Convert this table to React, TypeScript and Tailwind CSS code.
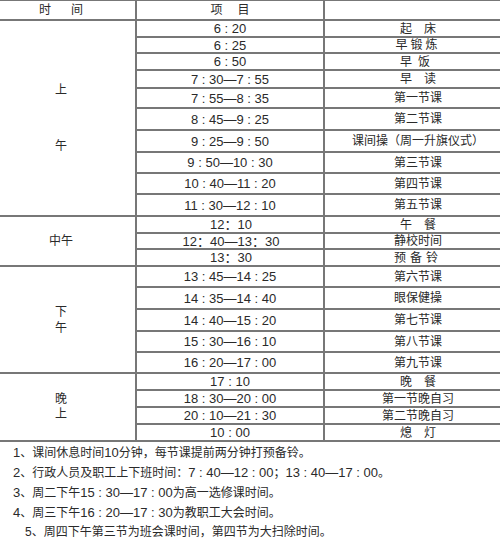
import { Fragment } from "react";

const rows: { time: string; item: string; sc?: boolean; track?: string }[] = [
  { time: "6 : 20", item: "起　床" },
  { time: "6 : 25", item: "早锻炼", track: "tracking-[3px]" },
  { time: "6 : 50", item: "早饭", track: "tracking-[6px]" },
  { time: "7 : 30—7 : 55", item: "早　读" },
  { time: "7 : 55—8 : 35", item: "第一节课" },
  { time: "8 : 45—9 : 25", item: "第二节课" },
  { time: "9 : 25—9 : 50", item: "课间操（周一升旗仪式）" },
  { time: "9 : 50—10 : 30", item: "第三节课" },
  { time: "10 : 40—11 : 20", item: "第四节课" },
  { time: "11 : 30—12 : 10", item: "第五节课" },
  { time: "12：10", item: "午　餐", sc: true },
  { time: "12：40—13：30", item: "静校时间", sc: true },
  { time: "13：30", item: "预备铃", sc: true, track: "tracking-[4px]" },
  { time: "13 : 45—14 : 25", item: "第六节课" },
  { time: "14 : 35—14 : 40", item: "眼保健操" },
  { time: "14 : 40—15 : 20", item: "第七节课" },
  { time: "15 : 30—16 : 10", item: "第八节课" },
  { time: "16 : 20—17 : 00", item: "第九节课" },
  { time: "17 : 10", item: "晚　餐" },
  { time: "18 : 30—20 : 00", item: "第一节晚自习" },
  { time: "20 : 10—21 : 30", item: "第二节晚自习" },
  { time: "10 : 00", item: "熄　灯" },
];

const notes = [
  "1、课间休息时间10分钟，每节课提前两分钟打预备铃。",
  "2、行政人员及职工上下班时间：7 : 40—12 : 00；13 : 40—17 : 00。",
  "3、周二下午15 : 30—17 : 00为高一选修课时间。",
  "4、周三下午16 : 20—17 : 30为教职工大会时间。",
];

const line = "border-[#777]";

// digits in the notes run a little larger than the Chinese text
function Note({ text }: { text: string }) {
  return (
    <>
      {text.split(/([\d :—]+)/).map((part, i) =>
        /\d/.test(part) ? (
          <span key={i} className="text-[13px]">
            {part}
          </span>
        ) : (
          <span key={i}>{part}</span>
        )
      )}
    </>
  );
}

function Group({ index }: { index: number }) {
  if (index === 0)
    return (
      <div className={`row-span-10 flex flex-col items-center justify-center gap-[38px] border-b-2 border-r-2 pr-[13px] ${line}`}>
        <span>上</span>
        <span>午</span>
      </div>
    );
  if (index === 10)
    return (
      <div className={`row-span-3 flex items-center justify-center border-b-2 border-r-2 pr-[13px] ${line}`}>
        中午
      </div>
    );
  if (index === 13)
    return (
      <div className={`row-span-5 flex flex-col items-center justify-center leading-[16px] border-b-2 border-r-2 pr-[13px] ${line}`}>
        <span>下</span>
        <span>午</span>
      </div>
    );
  if (index === 18)
    return (
      <div className={`row-span-4 flex flex-col items-center justify-center leading-[15px] border-b-2 border-r-2 pr-[13px] ${line}`}>
        <span>晚</span>
        <span>上</span>
      </div>
    );
  return null;
}

export default function App() {
  return (
    <div className="h-[550px] w-[500px] overflow-hidden bg-white font-['Liberation_Sans','Noto_Sans_CJK_SC',sans-serif] text-[12px] text-[#2a2a2a]">
      <div className={`grid grid-cols-[137px_188px_1fr] grid-rows-[20px_17px_16px_17px_18px_20px_22px_22px_21px_21px_22px_17px_16px_17px_21px_22px_22px_21px_21px_17px_17px_17px_17px] border-t ${line}`}>
        <div className={`flex items-center justify-center gap-[20px] border-b-2 border-r-2 pr-[13px] ${line}`}>
          <span>时</span>
          <span>间</span>
        </div>
        <div className={`flex items-center justify-center gap-[15px] border-b-2 border-r-2 ${line}`}>
          <span>项</span>
          <span>目</span>
        </div>
        <div className={`border-b-2 ${line}`} />

        {rows.map((r, i) => (
          <Fragment key={i}>
            <Group index={i} />
            <div
              className={`flex items-center justify-center whitespace-pre border-b-2 border-r-2 text-[13px] leading-none ${line} ${
                r.sc ? "pl-[2px]" : ""
              }`}
            >
              {r.time}
            </div>
            <div className={`flex items-center justify-center border-b-2 pl-[11px] leading-none ${line}`}>
              <span className={r.track ?? ""}>{r.item}</span>
            </div>
          </Fragment>
        ))}
      </div>

      <div className="pt-[1px] leading-[19px]">
        {notes.map((n) => (
          <div key={n} className="whitespace-pre pl-[13px]">
            <Note text={n} />
          </div>
        ))}
        <div className="pl-[25px]">5、周四下午第三节为班会课时间，第四节为大扫除时间。</div>
      </div>
    </div>
  );
}
